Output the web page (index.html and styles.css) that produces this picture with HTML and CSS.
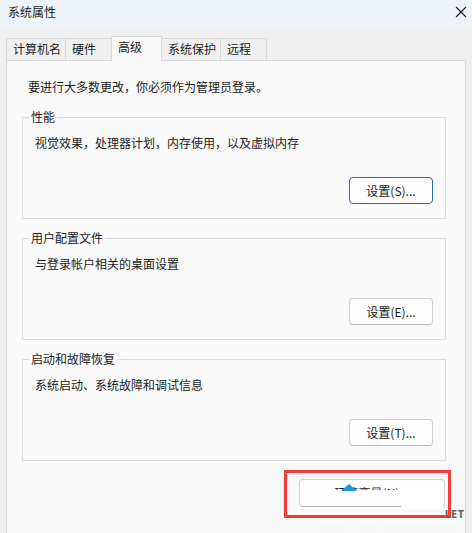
FILE: index.html
```html
<!DOCTYPE html>
<html lang="zh-CN">
<head>
<meta charset="utf-8">
<title>系统属性</title>
<link rel="stylesheet" href="styles.css">
</head>
<body>
<div class="window">
  <div class="titlebar">
    <span class="title">系统属性</span>
    <svg class="close" width="12" height="12" viewBox="0 0 12 12" aria-hidden="true">
      <path d="M1 1 L11 11 M11 1 L1 11" stroke="#1a1a1a" stroke-width="1.1" fill="none"/>
    </svg>
  </div>
  <div class="content">
    <div class="tabs">
      <div class="tab">计算机名</div>
      <div class="tab">硬件</div>
      <div class="tab active">高级</div>
      <div class="tab">系统保护</div>
      <div class="tab">远程</div>
    </div>
    <div class="panel">
      <p class="intro">要进行大多数更改，你必须作为管理员登录。</p>
      <fieldset class="group">
        <legend>性能</legend>
        <p class="desc">视觉效果，处理器计划，内存使用，以及虚拟内存</p>
        <div class="actions"><button class="btn focused">设置(S)...</button></div>
      </fieldset>
      <fieldset class="group">
        <legend>用户配置文件</legend>
        <p class="desc">与登录帐户相关的桌面设置</p>
        <div class="actions"><button class="btn">设置(E)...</button></div>
      </fieldset>
      <fieldset class="group">
        <legend>启动和故障恢复</legend>
        <p class="desc">系统启动、系统故障和调试信息</p>
        <div class="actions"><button class="btn">设置(T)...</button></div>
      </fieldset>
      <div class="bottom-actions"><button class="btn wide">环境变量(N)...</button></div>
    </div>
  </div>
  <div class="mask mask-text"></div>
  <div class="mask mask-corner"></div>
  <div class="cursor-tri"></div>
  <div class="highlight"></div>
  <div class="watermark">LET</div>
  <div class="reflection"></div>
</div>
</body>
</html>
```

FILE: styles.css
```css
* { box-sizing: border-box; }
html, body { margin: 0; padding: 0; }
body {
  width: 472px;
  height: 533px;
  overflow: hidden;
  background: #f0f0f0;
  font-family: "Noto Sans CJK SC", "Noto Sans", sans-serif;
  font-size: 12px;
  color: #1b1b1b;
}
.window {
  position: relative;
  width: 472px;
  height: 533px;
  background: #f0f0f0;
}
.titlebar {
  height: 27px;
  background: #eef3f9;
  display: flex;
  align-items: center;
  justify-content: space-between;
  padding: 0 5px 3px 8px;
}
.title { line-height: 16px; }
.close { display: block; margin-top: 0; }

.content { padding-top: 9px; }
.tabs {
  display: flex;
  align-items: flex-end;
  margin-left: 6px;
  height: 24px;
  position: relative;
  z-index: 2;
}
.tab {
  height: 22px;
  line-height: 20px;
  min-width: 47px;
  padding: 0 4px 0 6px;
  border: 1px solid #dadada;
  border-bottom: none;
  margin-right: -1px;
  background: #f0f0f0;
  white-space: nowrap;
}
.tab.active {
  height: 25px;
  min-width: 51px;
  margin-bottom: -1px;
  padding-bottom: 4px;
  background: #f9f9f9;
  position: relative;
  z-index: 3;
}
.panel {
  margin: 0 6px;
  height: 480px;
  border: 1px solid #d9d9d9;
  border-bottom: none;
  background: #f9f9f9;
  padding: 0 19px 0 15px;
}
.intro {
  margin: 18px 0 0 6px;
  line-height: 16px;
}
.group {
  margin: 14px 0 0 0;
  border: 1px solid #dcdcdc;
  padding: 0 12px 14px 6px;
  min-width: 0;
}
.group + .group { margin-top: 11px; }
.group legend {
  padding: 0 2px;
  line-height: 16px;
}
.desc {
  margin: 10px 0 0 6px;
  line-height: 16px;
}
.actions {
  display: flex;
  justify-content: flex-end;
  margin-top: 26px;
}
.btn {
  font: inherit;
  color: #1b1b1b;
  width: 84px;
  height: 27px;
  padding: 0;
  background: #fdfdfd;
  border: 1px solid #d0d0d0;
  border-bottom-color: #b8b8b8;
  border-radius: 4px;
  line-height: 16px;
}
.btn.focused {
  border: 1px solid #1f6fc5;
}
.bottom-actions {
  display: flex;
  justify-content: flex-end;
  margin-top: 18px;
  padding-right: 1px;
}
.btn.wide {
  width: 146px;
  height: 28px;
  background: #fefefe;
}

/* screenshot artefacts layered over the dialog */
.mask {
  position: absolute;
  background: #fefefe;
}
.mask-text { left: 326px; top: 490px; width: 76px; height: 16px; }
.mask-corner { left: 401px; top: 483px; width: 42px; height: 26px; background: #ffffff; }
.cursor-tri {
  position: absolute;
  left: 341px;
  top: 484px;
  width: 16px;
  height: 7px;
  background: #1b9ae2;
  clip-path: polygon(50% 0, 100% 100%, 0 100%);
}
.highlight {
  position: absolute;
  left: 284px;
  top: 470px;
  width: 167px;
  height: 48px;
  border: 3px solid #f43b3b;
}
.watermark {
  position: absolute;
  left: 445px;
  top: 509px;
  font-family: "DejaVu Sans", sans-serif;
  font-size: 10px;
  font-weight: bold;
  letter-spacing: 1px;
  color: #5e5e5e;
  line-height: 12px;
  transform: scaleX(0.85);
  transform-origin: left;
}
.reflection {
  position: absolute;
  left: 320px;
  top: 524px;
  width: 138px;
  height: 7px;
  background: linear-gradient(90deg, #eaf2fb 0, #eaf2fb 18%, transparent 18%, transparent 28%, #eef3f9 28%, #eef3f9 40%, transparent 40%, transparent 48%, #eef1f5 48%);
  opacity: 0.4;
}
```
